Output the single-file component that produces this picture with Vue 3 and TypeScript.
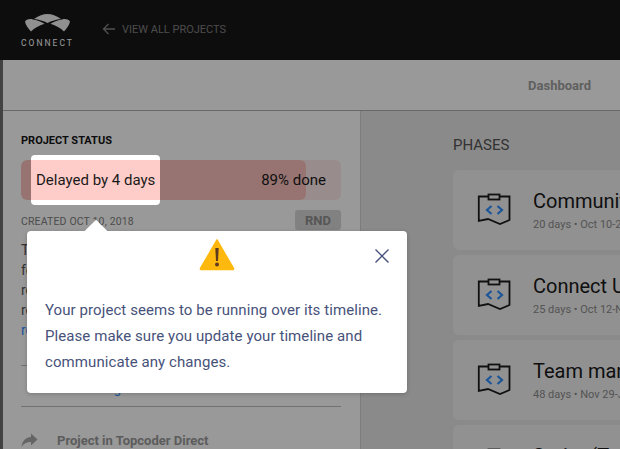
<script setup lang="ts">
interface Phase {
  title: string
  meta: string
}

const phases: Phase[] = [
  { title: 'Community challenge', meta: '20 days • Oct 10-29, 2018' },
  { title: 'Connect UI update', meta: '25 days • Oct 12-Nov 5, 2018' },
  { title: 'Team management', meta: '48 days • Nov 29-Jan 15, 2019' },
  { title: 'Sprint (Team)', meta: '30 days • Jan 16-Feb 14, 2019' },
]
</script>

<template>
  <div class="page">
    <header class="topbar">
      <div class="logo">
        <svg width="48" height="20" viewBox="0 0 48 20" fill="#f0f0f0">
          <path d="M10 6C15 2.500 19 1 23.500 1C28 1 32 2.500 37 6C32 6.500 27.500 8 23.500 10C19.500 8 15 6.500 10 6Z" />
          <path d="M1 8.500C3 6 6 5.500 9 6.500C14 7.500 17.500 8.800 20.500 10.800C15 12.500 10.500 15 7 18.500C4 15 1.500 12 1 8.500Z" />
          <path d="M46 8.500C44 6 41 5.500 38 6.500C33 7.500 29.500 8.800 26.500 10.800C32 12.500 36.500 15 40 18.500C43 15 45.500 12 46 8.500Z" />
        </svg>
        <span class="logo-text">CONNECT</span>
      </div>
      <a class="back-link">
        <svg width="14" height="12" viewBox="0 0 14 12" fill="none" stroke="#858585" stroke-width="1.3">
          <path d="M13 6H1.500M6.500 1L1.500 6l5 5" />
        </svg>
        VIEW ALL PROJECTS
      </a>
    </header>

    <div class="frame">
      <nav class="tabs"><span class="tab">Dashboard</span></nav>

      <div class="content">
        <aside class="sidebar">
          <h4 class="status-title">PROJECT STATUS</h4>
          <div class="progress">
            <div class="progress-fill"></div>
            <span class="progress-label">89% done</span>
          </div>
          <div class="created-row">
            <span class="created">CREATED OCT 10, 2018</span>
            <span class="tag">RND</span>
          </div>
          <p class="desc">
            The project covers<br />
            features and<br />
            requirements<br />
            requested<br />
            <a class="more">read more</a>
          </p>
          <div class="members">Manage team</div>
          <div class="direct">
            <svg width="17" height="15" viewBox="0 0 17 15">
              <path d="M10 0.500L16.500 6.500L10 12.500V9C5.500 9 2.500 10.500 0.500 14C1 9 4 4.500 10 4Z" fill="#a8a8a8" />
            </svg>
            <span>Project in Topcoder Direct</span>
          </div>
        </aside>

        <main class="main">
          <h3 class="phases-title">PHASES</h3>
          <div v-for="phase in phases" :key="phase.title" class="card">
            <svg class="phase-icon" width="34" height="34" viewBox="0 0 34 34" fill="none">
              <path d="M11.500 3.500H1.800V28L11 26L23 31L32.500 27V3.500H22.500" stroke="#1c1c1c" stroke-width="1.800" />
              <rect x="11.500" y="1.500" width="11" height="5" stroke="#1c1c1c" stroke-width="1.800" />
              <path d="M14.500 13L10 17L14.500 21M20.500 13L25 17L20.500 21" stroke="#2f8fff" stroke-width="2.200" />
            </svg>
            <div class="card-text">
              <div class="card-title">{{ phase.title }}</div>
              <div class="card-meta">{{ phase.meta }}</div>
            </div>
          </div>
        </main>
      </div>
    </div>

    <div class="overlay"></div>

    <div class="highlight">
      <div class="highlight-bar">Delayed by 4 days</div>
    </div>

    <div class="popup">
      <span class="popup-arrow"></span>
      <svg class="warn" width="36" height="33" viewBox="0 0 36 33">
        <path d="M18 2L34.500 30.500A0.800 0.800 0 0 1 34 31.500H2A0.800 0.800 0 0 1 1.500 30.500Z" fill="#ffb80d" stroke="#ffb80d" stroke-width="1.500" stroke-linejoin="round" />
        <path d="M16.300 10H19.700L19 23H17Z" fill="#5e3b1e" />
        <circle cx="18" cy="26.500" r="2" fill="#5e3b1e" />
      </svg>
      <svg class="close" width="14" height="14" viewBox="0 0 14 14" stroke="#47527a" stroke-width="1.400">
        <path d="M0.500 0.500L13.500 13.500M13.500 0.500L0.500 13.500" />
      </svg>
      <p class="popup-text">
        Your project seems to be running over its timeline.
        Please make sure you update your timeline and
        communicate any changes.
      </p>
    </div>
  </div>
</template>

<style>
html,
body {
  margin: 0;
  overflow: hidden;
}
</style>

<style scoped>
.page {
  position: relative;
  width: 620px;
  height: 449px;
  overflow: hidden;
  font-family: Roboto, "Liberation Sans", sans-serif;
  background: #e6e6e6;
}

.topbar {
  display: flex;
  align-items: center;
  height: 60px;
  padding-left: 21px;
  background: #161616;
}

.logo {
  display: flex;
  flex-direction: column;
  align-items: center;
  gap: 5px;
  width: 53px;
  margin-top: 1px;
}

.logo-text {
  font-size: 8.500px;
  line-height: 10px;
  letter-spacing: 2px;
  color: #fff;
  white-space: nowrap;
}

.back-link {
  display: flex;
  align-items: center;
  gap: 6px;
  margin-left: 28px;
  margin-top: -2px;
  font-size: 11px;
  color: #808080;
  white-space: nowrap;
}

.frame {
  height: 389px;
  border-left: 3px solid #6f6f6f;
}

.tabs {
  display: flex;
  justify-content: flex-end;
  align-items: center;
  height: 51px;
  padding-right: 29px;
  background: #fff;
  border-bottom: 1px solid #b0b0b0;
  box-sizing: border-box;
}

.tab {
  font-size: 13px;
  font-weight: 700;
  color: #a0a0a0;
}

.content {
  display: flex;
}

.sidebar {
  width: 358px;
  height: 340px;
  padding: 24px 20px 0 18px;
  box-sizing: border-box;
  background: #fff;
  border-right: 1px solid #d0d0d0;
}

.status-title {
  margin: 0 0 13px;
  font-size: 11px;
  line-height: 12px;
  font-weight: 700;
  color: #151515;
}

.progress {
  position: relative;
  display: flex;
  align-items: center;
  justify-content: flex-end;
  width: 320px;
  height: 40px;
  padding-right: 15px;
  box-sizing: border-box;
  border-radius: 6px;
  background: #fdeaea;
  overflow: hidden;
}

.progress-fill {
  position: absolute;
  left: 0;
  top: 0;
  bottom: 0;
  width: 285px;
  border-radius: 6px;
  background: #fcc2be;
}

.progress-label {
  position: relative;
  font-size: 15px;
  color: #1a1a1a;
}

.created-row {
  display: flex;
  align-items: center;
  justify-content: space-between;
  width: 320px;
  height: 20px;
  margin-top: 10px;
}

.created {
  margin-top: 3px;
  font-size: 10.500px;
  color: #808080;
  letter-spacing: 0.150px;
}

.tag {
  display: flex;
  align-items: center;
  justify-content: center;
  width: 46px;
  height: 20px;
  border-radius: 3px;
  background: #d8d8d8;
  font-size: 13px;
  font-weight: 700;
  color: #8f8f8f;
}

.desc {
  margin: 10px 0 0;
  font-size: 14px;
  line-height: 20px;
  color: #555;
  white-space: nowrap;
}

.more {
  color: #2f8fff;
}

.members {
  width: 320px;
  height: 42px;
  margin-top: 25px;
  box-sizing: border-box;
  padding: 15px 0 0 60px;
  border-top: 1px solid #bdbdbd;
  border-bottom: 1px solid #bdbdbd;
  font-size: 13px;
  line-height: 15px;
  color: #2f8fff;
}

.direct {
  display: flex;
  align-items: center;
  gap: 19px;
  width: 320px;
  margin-top: 26px;
  font-size: 13px;
  font-weight: 700;
  color: #9a9a9a;
}

.main {
  flex: 1;
  padding: 24px 0 0 92px;
  min-width: 0;
  overflow: hidden;
}

.phases-title {
  margin: 0 0 15px;
  font-size: 15px;
  line-height: 20px;
  font-weight: 400;
  color: #555;
}

.card {
  display: flex;
  align-items: center;
  width: 300px;
  height: 80px;
  margin-bottom: 5px;
  padding-left: 24px;
  box-sizing: border-box;
  border-radius: 6px;
  background: #f2f2f2;
  white-space: nowrap;
}

.phase-icon {
  flex: none;
}

.card-text {
  margin-left: 22px;
}

.card-title {
  font-size: 20px;
  line-height: 26px;
  color: #1a1a1a;
}

.card-meta {
  margin-top: 3px;
  font-size: 11px;
  line-height: 16px;
  color: #8c8c8c;
}

.overlay {
  position: absolute;
  inset: 0;
  background: rgba(0, 0, 0, 0.4);
}

.highlight {
  position: absolute;
  left: 31px;
  top: 155px;
  display: flex;
  align-items: center;
  width: 129px;
  height: 50px;
  background: #fff;
  border-radius: 4px;
}

.highlight-bar {
  display: flex;
  align-items: center;
  width: 100%;
  height: 40px;
  padding-left: 5px;
  box-sizing: border-box;
  background: #ffcdc9;
  font-size: 15px;
  color: #1a1a1a;
  white-space: nowrap;
}

.popup {
  position: absolute;
  left: 27px;
  top: 231px;
  width: 380px;
  height: 162px;
  background: #fff;
  border-radius: 4px;
  box-shadow: 0 1px 4px rgba(0, 0, 0, 0.2);
}

.popup-arrow {
  position: absolute;
  left: 61px;
  top: -8px;
  width: 16px;
  height: 16px;
  background: #fff;
  transform: rotate(45deg);
}

.warn {
  position: absolute;
  left: 172px;
  top: 7px;
}

.close {
  position: absolute;
  right: 18px;
  top: 18px;
}

.popup-text {
  position: absolute;
  left: 18px;
  top: 66px;
  width: 350px;
  margin: 0;
  font-size: 15px;
  letter-spacing: 0.080px;
  line-height: 26px;
  color: #47527a;
}
</style>
